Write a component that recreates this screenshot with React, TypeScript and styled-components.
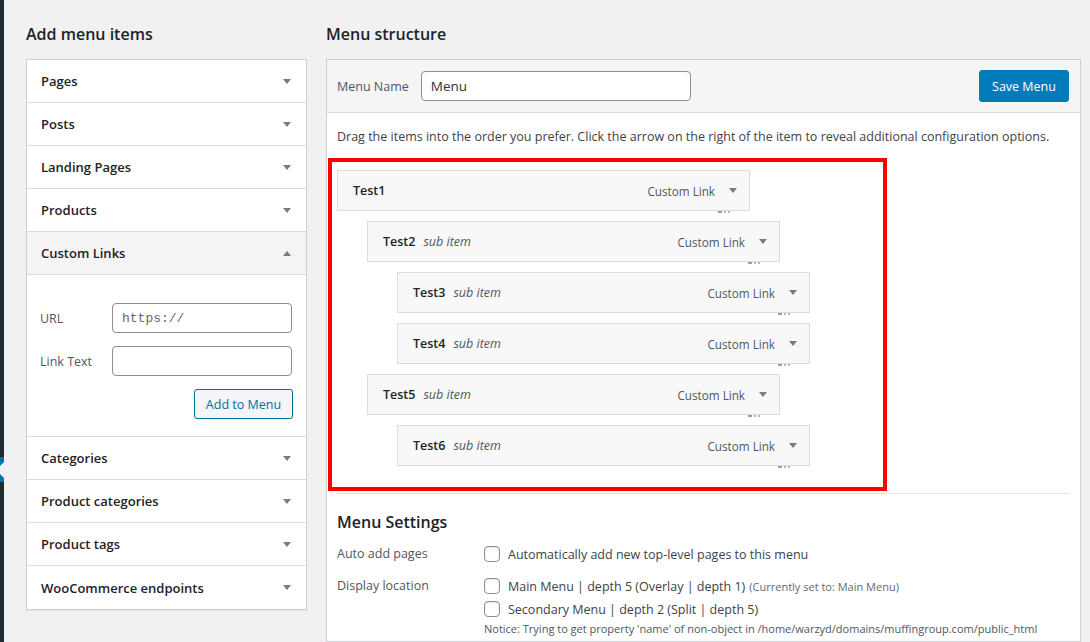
import styled, { createGlobalStyle } from "styled-components";

const GlobalStyle = createGlobalStyle`
  html, body {
    margin: 0;
    padding: 0;
  }
  body {
    background: #f1f1f1;
    font-family: "Open Sans", "Noto Sans", sans-serif;
    font-size: 12.5px;
    color: #3c434a;
  }
  * {
    box-sizing: border-box;
  }
`;

type Section = { title: string; open?: boolean };

const sections: Section[] = [
  { title: "Pages" },
  { title: "Posts" },
  { title: "Landing Pages" },
  { title: "Products" },
  { title: "Custom Links", open: true },
  { title: "Categories" },
  { title: "Product categories" },
  { title: "Product tags" },
  { title: "WooCommerce endpoints" },
];

type MenuEntry = { title: string; depth: number; sub?: boolean };

const menuEntries: MenuEntry[] = [
  { title: "Test1", depth: 0 },
  { title: "Test2", depth: 1, sub: true },
  { title: "Test3", depth: 2, sub: true },
  { title: "Test4", depth: 2, sub: true },
  { title: "Test5", depth: 1, sub: true },
  { title: "Test6", depth: 2, sub: true },
];

export default function App() {
  return (
    <>
      <GlobalStyle />
      <Page>
        <AdminEdge>
          <EdgeMarker />
        </AdminEdge>

        <Columns>
          <LeftColumn>
            <Heading>Add menu items</Heading>
            <Accordion>
              {sections.map((section) => (
                <div key={section.title}>
                  <SectionTitle open={!!section.open}>
                    {section.title}
                    <Arrow up={!!section.open} />
                  </SectionTitle>
                  {section.open && (
                    <SectionBody>
                      <FieldGrid>
                        <FieldLabel>URL</FieldLabel>
                        <TextInput mono defaultValue="https://" />
                        <FieldLabel>Link Text</FieldLabel>
                        <TextInput defaultValue="" />
                      </FieldGrid>
                      <ButtonRow>
                        <SecondaryButton>Add to Menu</SecondaryButton>
                      </ButtonRow>
                    </SectionBody>
                  )}
                </div>
              ))}
            </Accordion>
          </LeftColumn>

          <RightColumn>
            <Heading>Menu structure</Heading>
            <MenuPanel>
              <PanelHeader>
                <NameGroup>
                  <NameLabel>Menu Name</NameLabel>
                  <NameInput defaultValue="Menu" />
                </NameGroup>
                <PrimaryButton>Save Menu</PrimaryButton>
              </PanelHeader>

              <PanelBody>
                <Hint>
                  Drag the items into the order you prefer. Click the arrow on
                  the right of the item to reveal additional configuration
                  options.
                </Hint>

                <Highlight>
                  {menuEntries.map((entry) => (
                    <MenuItem key={entry.title} depth={entry.depth}>
                      <ItemTitle>{entry.title}</ItemTitle>
                      {entry.sub && <SubLabel>sub item</SubLabel>}
                      <ItemType>Custom Link</ItemType>
                      <Arrow />
                      <EditMarks />
                    </MenuItem>
                  ))}
                </Highlight>

                <Divider />

                <SettingsHeading>Menu Settings</SettingsHeading>

                <SettingRow>
                  <SettingLabel>Auto add pages</SettingLabel>
                  <div>
                    <Option>
                      <Checkbox />
                      Automatically add new top-level pages to this menu
                    </Option>
                  </div>
                </SettingRow>

                <SettingRow gap={9}>
                  <SettingLabel>Display location</SettingLabel>
                  <div>
                    <Option>
                      <Checkbox />
                      Main Menu | depth 5 (Overlay | depth 1)
                      <Current>(Currently set to: Main Menu)</Current>
                    </Option>
                    <Option>
                      <Checkbox />
                      Secondary Menu | depth 2 (Split | depth 5)
                    </Option>
                    <Notice>
                      Notice: Trying to get property 'name' of non-object in
                      /home/warzyd/domains/muffingroup.com/public_html
                    </Notice>
                  </div>
                </SettingRow>
              </PanelBody>
            </MenuPanel>
          </RightColumn>
        </Columns>
      </Page>
    </>
  );
}

const Page = styled.div`
  display: flex;
  height: 642px;
  overflow: hidden;
`;

const AdminEdge = styled.div`
  width: 4px;
  flex-shrink: 0;
  background: #23282d;
  padding-top: 457px;
  overflow: hidden;
`;

const EdgeMarker = styled.div`
  position: relative;
  height: 25px;
  background: #0073aa;

  &::after {
    content: "";
    position: absolute;
    right: 0;
    top: 50%;
    margin-top: -8px;
    border: 8px solid transparent;
    border-right-color: #f1f1f1;
  }
`;

const Columns = styled.div`
  display: flex;
  gap: 19px;
  padding-left: 22px;
`;

const LeftColumn = styled.div`
  width: 281px;
  flex-shrink: 0;
`;

const RightColumn = styled.div`
  width: 755px;
  flex-shrink: 0;
  display: flex;
  flex-direction: column;
`;

const Heading = styled.h2`
  flex-shrink: 0;
  margin: 0;
  padding-top: 22px;
  height: 59px;
  font-size: 16px;
  line-height: 24px;
  font-weight: 600;
  color: #1d2327;
`;

const Accordion = styled.div`
  background: #fff;
  border: 1px solid #ccd0d4;
  box-shadow: 0 1px 1px rgba(0, 0, 0, 0.04);

  & > div:last-child > div:last-child {
    border-bottom: none;
  }
`;

const SectionTitle = styled.div<{ open: boolean }>`
  height: 43px;
  display: flex;
  align-items: center;
  justify-content: space-between;
  padding: 0 15px 0 14px;
  border-bottom: 1px solid #dcdcde;
  background: ${(props) => (props.open ? "#f4f4f4" : "#fff")};
  font-size: 13px;
  font-weight: 600;
  color: #1d2327;
`;

const Arrow = styled.span<{ up?: boolean }>`
  width: 0;
  height: 0;
  flex-shrink: 0;
  border-left: 4px solid transparent;
  border-right: 4px solid transparent;
  ${(props) =>
    props.up
      ? "border-bottom: 5px solid #787c82;"
      : "border-top: 5px solid #787c82;"}
`;

const SectionBody = styled.div`
  padding: 28px 14px 17px 13px;
  border-bottom: 1px solid #dcdcde;
`;

const FieldGrid = styled.div`
  display: grid;
  grid-template-columns: 72px 180px;
  align-items: center;
  row-gap: 13px;
`;

const FieldLabel = styled.label`
  font-size: 12.5px;
  color: #50575e;
`;

const TextInput = styled.input<{ mono?: boolean }>`
  width: 180px;
  height: 30px;
  padding: 0 9px;
  border: 1px solid #8c8f94;
  border-radius: 4px;
  background: #fff;
  font-family: ${(props) =>
    props.mono ? '"Liberation Mono", monospace' : "inherit"};
  font-size: 13px;
  color: #646970;
  outline: none;
`;

const ButtonRow = styled.div`
  display: flex;
  justify-content: flex-end;
  margin-top: 13px;
  margin-right: -1px;
`;

const SecondaryButton = styled.button`
  width: 99px;
  height: 30px;
  padding: 0;
  border: 1px solid #0071a1;
  border-radius: 3px;
  background: #f3f5f6;
  color: #0071a1;
  font-family: inherit;
  font-size: 12.5px;
`;

const MenuPanel = styled.div`
  flex: 1;
  background: #fff;
  border: 1px solid #ccd0d4;
`;

const PanelHeader = styled.div`
  height: 53px;
  display: flex;
  align-items: center;
  justify-content: space-between;
  padding: 0 11px 0 10px;
  background: #f5f5f5;
  border-bottom: 1px solid #dcdcde;
`;

const NameGroup = styled.div`
  display: flex;
  align-items: center;
  gap: 12px;
`;

const NameLabel = styled.label`
  font-size: 12.5px;
  color: #50575e;
`;

const NameInput = styled.input`
  width: 270px;
  height: 30px;
  padding: 0 9px;
  border: 1px solid #8c8f94;
  border-radius: 4px;
  background: #fff;
  font-family: inherit;
  font-size: 13.5px;
  color: #2c3338;
  outline: none;
`;

const PrimaryButton = styled.button`
  width: 90px;
  height: 32px;
  padding: 0;
  border: 1px solid #007cba;
  border-radius: 3px;
  background: #007cba;
  color: #fff;
  font-family: inherit;
  font-size: 12.5px;
`;

const PanelBody = styled.div`
  padding: 14px 10px 0;
`;

const Hint = styled.p`
  margin: 0 0 11px;
  line-height: 20px;
  font-size: 12.5px;
  white-space: nowrap;
  color: #3c434a;
`;

const Highlight = styled.div`
  width: 559px;
  margin-left: -9px;
  border: 4px solid #ff0000;
  padding: 8px 0 21px 5px;
  display: flex;
  flex-direction: column;
  gap: 10px;
`;

const MenuItem = styled.div<{ depth: number }>`
  position: relative;
  width: 413px;
  height: 41px;
  margin-left: ${(props) => props.depth * 30}px;
  display: flex;
  align-items: center;
  padding: 0 12px 0 15px;
  background: #f8f8f8;
  border: 1px solid #dcdcde;
`;

const ItemTitle = styled.span`
  font-size: 12.5px;
  font-weight: 600;
  color: #1d2327;
`;

const SubLabel = styled.span`
  margin-left: 8px;
  font-style: italic;
  font-size: 12.5px;
  color: #50575e;
`;

const ItemType = styled.span`
  margin-left: auto;
  margin-right: 14px;
  font-size: 11.7px;
  color: #50575e;
`;

/* tops of the hidden "Edit" link that show just under each item */
const EditMarks = styled.span`
  position: absolute;
  top: calc(100% + 1px);
  right: 18px;
  width: 13px;
  height: 2px;
  background: linear-gradient(
    to right,
    #9a9ea3 0 4px,
    transparent 4px 6px,
    #b4b7ba 6px 8px,
    transparent 8px 10px,
    #b4b7ba 10px 12px,
    transparent 12px
  );
`;

const Divider = styled.div`
  margin-top: 2px;
  border-top: 1px solid #e2e4e7;
`;

const SettingsHeading = styled.h3`
  margin: 16px 0 0;
  font-size: 16px;
  line-height: 24px;
  font-weight: 600;
  color: #1d2327;
`;

const SettingRow = styled.div<{ gap?: number }>`
  display: grid;
  grid-template-columns: 147px 1fr;
  margin-top: ${(props) => props.gap ?? 10}px;
`;

const SettingLabel = styled.div`
  line-height: 20px;
  font-size: 12.5px;
  color: #50575e;
`;

const Option = styled.label`
  display: flex;
  align-items: center;
  gap: 8px;
  height: 20px;
  margin-bottom: 3px;
  font-size: 12.5px;
  color: #3c434a;
`;

const Checkbox = styled.span`
  width: 16px;
  height: 16px;
  flex-shrink: 0;
  border: 1px solid #8c8f94;
  border-radius: 4px;
  background: #fff;
  box-shadow: inset 0 1px 2px rgba(0, 0, 0, 0.1);
`;

const Current = styled.span`
  margin-left: -4px;
  font-size: 11px;
  color: #646970;
`;

const Notice = styled.p`
  margin: -1px 0 0;
  line-height: 16px;
  font-size: 11px;
  color: #50575e;
`;
